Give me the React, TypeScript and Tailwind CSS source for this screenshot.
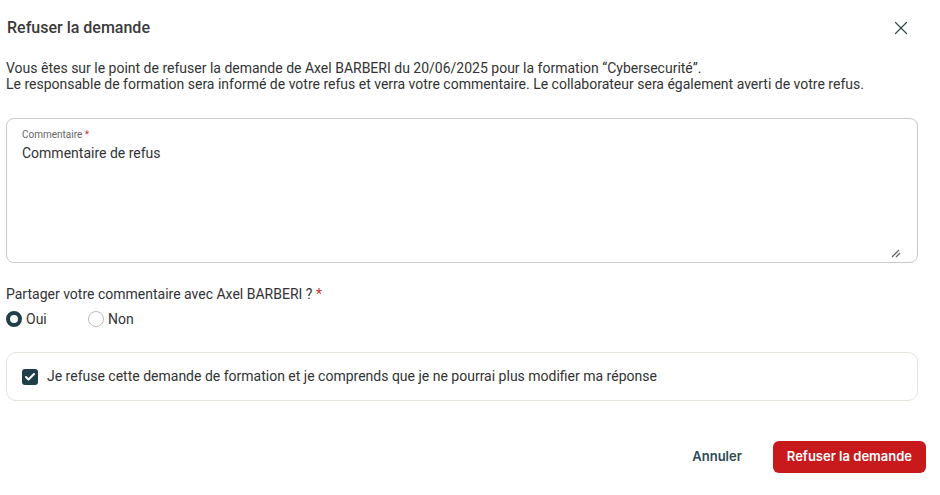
import React, { useState } from 'react';
import { X, Check } from 'lucide-react';

const teal = "#1e3e48";

const App: React.FC = () => {
    const [share, setShare] = useState<'oui' | 'non'>('oui');
    const [agree, setAgree] = useState(true);

    return (
        <div className="w-[940px] h-[495px] bg-white pl-[6px] pr-[22px] text-[#333] font-['Roboto',sans-serif]">

            {/* Header */}
            <div className="flex items-center justify-between h-[56px]">
                <h2 className="text-[16px] font-medium text-[#3a3a3a] pl-px">Refuser la demande</h2>
                <button className="mr-[6px] text-[#2c4a52]">
                    <X className="w-[22px] h-[22px]" strokeWidth={1.3} />
                </button>
            </div>

            {/* Intro */}
            <div className="text-[14px] leading-4 text-[#333] mt-[4px]">
                <p>Vous êtes sur le point de refuser la demande de Axel BARBERI du 20/06/2025 pour la formation “Cybersecurité”.</p>
                <p>Le responsable de formation sera informé de votre refus et verra votre commentaire. Le collaborateur sera également averti de votre refus.</p>
            </div>

            {/* Commentaire */}
            <div className="relative mt-[26px] h-[145px] border border-[#c9c9c9] rounded-[8px] px-[15px] pt-[10px]">
                <label className="block text-[10px] leading-3 text-[#666]">
                    Commentaire <span className="text-[#d32f2f]">*</span>
                </label>
                <div className="text-[14px] leading-5 mt-[2px] text-[#333]">Commentaire de refus</div>
                <svg className="absolute right-[16px] bottom-[4px]" width="10" height="10" viewBox="0 0 10 10">
                    <path d="M1 9 L8 2 M5 9 L9 5" stroke="#666" strokeWidth="1.3" />
                </svg>
            </div>

            {/* Partage */}
            <div className="mt-[23px] text-[14px] leading-4">
                Partager votre commentaire avec Axel BARBERI ? <span className="text-[#d32f2f]">*</span>
            </div>
            <div className="flex items-center mt-[9px] text-[14px] leading-4">
                <label className="flex items-center gap-[4px] w-[82px] cursor-pointer" onClick={() => setShare('oui')}>
                    <span className={share === 'oui' ? "w-[16px] h-[16px] rounded-full border-[4px] border-[#1e3e48] bg-white" : "w-[16px] h-[16px] rounded-full border border-[#bdbdbd] bg-white"} />
                    Oui
                </label>
                <label className="flex items-center gap-[4px] cursor-pointer" onClick={() => setShare('non')}>
                    <span className={share === 'non' ? "w-[16px] h-[16px] rounded-full border-[4px] border-[#1e3e48] bg-white" : "w-[16px] h-[16px] rounded-full border border-[#bdbdbd] bg-white"} />
                    Non
                </label>
            </div>

            {/* Confirmation */}
            <div className="mt-[25px] h-[49px] border border-[#e6e3dc] rounded-[10px] flex items-center pl-[15px] gap-[9px] text-[14px]">
                <button
                    onClick={() => setAgree(!agree)}
                    className="w-[16px] h-[16px] rounded-[3px] flex items-center justify-center"
                    style={{ backgroundColor: agree ? teal : 'white' }}
                >
                    {agree && <Check className="w-[12px] h-[12px] text-white" strokeWidth={4} />}
                </button>
                <span>Je refuse cette demande de formation et je comprends que je ne pourrai plus modifier ma réponse</span>
            </div>

            {/* Actions */}
            <div className="flex items-center justify-end gap-[31px] mt-[40px] -mr-[8px] font-['Inter',sans-serif]">
                <button className="text-[13px] font-semibold text-[#2f4a54]">Annuler</button>
                <button className="h-[32px] px-[14px] rounded-[6px] bg-[#c8191c] text-white text-[13px] font-semibold">
                    Refuser la demande
                </button>
            </div>
        </div>
    );
};

export default App;
